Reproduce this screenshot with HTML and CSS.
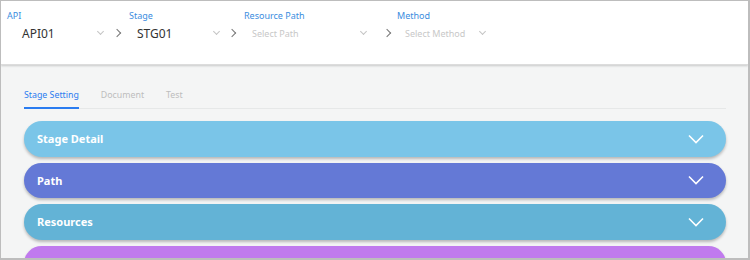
FILE: index.html
```html
<!DOCTYPE html>
<html lang="en">
<head>
    <meta charset="UTF-8">
    <meta name="viewport" content="width=device-width, initial-scale=1.0">
    <title>API Stage</title>
    <link rel="stylesheet" href="styles.css">
</head>
<body>
    <div class="frame">
        <header class="toolbar">
            <div class="field">
                <label>API</label>
                <div class="select select-api"><span class="value">API01</span><span class="caret"></span></div>
            </div>
            <span class="sep sep-1"></span>
            <div class="field">
                <label>Stage</label>
                <div class="select select-stage"><span class="value">STG01</span><span class="caret"></span></div>
            </div>
            <span class="sep sep-2"></span>
            <div class="field">
                <label>Resource Path</label>
                <div class="select select-path"><span class="placeholder">Select Path</span><span class="caret"></span></div>
            </div>
            <span class="sep sep-3"></span>
            <div class="field">
                <label>Method</label>
                <div class="select select-method"><span class="placeholder">Select Method</span><span class="caret"></span></div>
            </div>
        </header>

        <main class="content">
            <nav class="tabs">
                <span class="tab active">Stage Setting</span>
                <span class="tab">Document</span>
                <span class="tab">Test</span>
            </nav>

            <div class="panels">
                <div class="panel panel-detail">
                    <span>Stage Detail</span>
                    <svg class="chev" width="16" height="10" viewBox="0 0 16 10"><path d="M1 1.5 L8 8.5 L15 1.5" fill="none" stroke="#fff" stroke-width="1.6"/></svg>
                </div>
                <div class="panel panel-path">
                    <span>Path</span>
                    <svg class="chev" width="16" height="10" viewBox="0 0 16 10"><path d="M1 1.5 L8 8.5 L15 1.5" fill="none" stroke="#fff" stroke-width="1.6"/></svg>
                </div>
                <div class="panel panel-resources">
                    <span>Resources</span>
                    <svg class="chev" width="16" height="10" viewBox="0 0 16 10"><path d="M1 1.5 L8 8.5 L15 1.5" fill="none" stroke="#fff" stroke-width="1.6"/></svg>
                </div>
                <div class="panel panel-auth">
                    <span>Authorization</span>
                    <svg class="chev" width="16" height="10" viewBox="0 0 16 10"><path d="M1 1.5 L8 8.5 L15 1.5" fill="none" stroke="#fff" stroke-width="1.6"/></svg>
                </div>
            </div>
        </main>
    </div>
</body>
</html>
```

FILE: styles.css
```css
html, body {
    margin: 0;
    padding: 0;
}
body {
    font-family: 'Noto Sans', 'Open Sans', sans-serif;
    color: #333;
    overflow: hidden;
}
.frame {
    box-sizing: border-box;
    width: 750px;
    height: 260px;
    border: 1px solid #bdbdbd;
    border-right-width: 2px;
    border-bottom-width: 2px;
    background-color: #f4f5f5;
    overflow: hidden;
}
.toolbar {
    display: flex;
    align-items: flex-start;
    height: 64px;
    padding: 9px 0 0 6px;
    box-sizing: border-box;
    background-color: #fff;
    box-shadow: 0 1px 2px rgba(0, 0, 0, 0.18);
    border-bottom: 1px solid #dcdcdc;
}
.field {
    display: flex;
    flex-direction: column;
}
.field label {
    font-size: 9px;
    line-height: 12px;
    color: #3b8de0;
}
.select {
    display: flex;
    align-items: center;
    justify-content: space-between;
    box-sizing: border-box;
    padding: 0 3px 0 8px;
    margin-top: 3px;
    height: 16px;
}
.select-api { width: 99px; padding-left: 15px; }
.select-stage { width: 93px; }
.select-path { width: 125px; }
.select-method { width: 91px; }
.value {
    font-size: 12px;
    color: #333;
}
.placeholder {
    font-size: 9px;
    color: #c8c8c8;
}
.caret {
    width: 4px;
    height: 4px;
    border-right: 1px solid #c4c4c4;
    border-bottom: 1px solid #c4c4c4;
    transform: rotate(45deg);
    margin-top: -3px;
}
.sep {
    width: 5px;
    height: 5px;
    border-right: 1px solid #777;
    border-top: 1px solid #777;
    transform: rotate(45deg);
    margin: 20px 9px 0 8px;
}
.sep-2 {
    margin-left: 7px;
    margin-right: 9px;
}
.sep-3 {
    margin-left: 15px;
    margin-right: 7px;
}
.content {
    padding: 20px 22px 0 23px;
}
.tabs {
    display: flex;
    gap: 22px;
    border-bottom: 1px solid #e6e8e8;
    height: 24px;
    box-sizing: border-box;
}
.tab {
    font-size: 8.8px;
    line-height: 14px;
    color: #bdbdbd;
    padding-top: 3px;
}
.tab.active {
    color: #2a7cf0;
    border-bottom: 2px solid #2a7cf0;
    height: 24px;
    margin-bottom: -1px;
    box-sizing: border-box;
}
.panels {
    display: flex;
    flex-direction: column;
    gap: 6px;
    margin-top: 12px;
}
.panel {
    display: flex;
    align-items: center;
    justify-content: space-between;
    height: 35.5px;
    padding: 0 22px 0 13px;
    border-radius: 18px;
    color: #fff;
    font-size: 11px;
    font-weight: bold;
    box-shadow: 0 2px 3px rgba(0, 0, 0, 0.25);
    flex-shrink: 0;
}
.panel-detail { background-color: #7ac5e8; }
.panel-path { background-color: #6479d6; }
.panel-resources { background-color: #63b3d6; }
.panel-auth { background-color: #c07aee; }
.chev {
    display: block;
}
```
